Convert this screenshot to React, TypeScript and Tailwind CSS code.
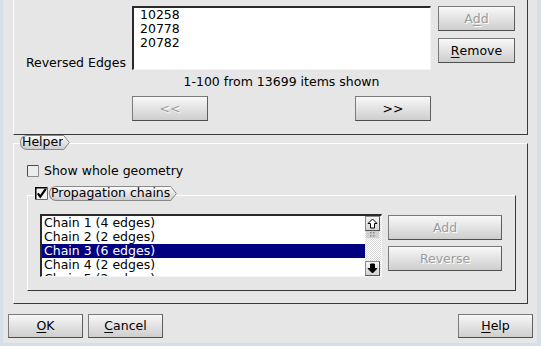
import React from "react";

function Btn({
  children,
  className = "",
  disabled = false,
}: {
  children: React.ReactNode;
  className?: string;
  disabled?: boolean;
}) {
  return (
    <div
      className={`flex items-center justify-center border border-[#7a7a7a] border-b-[#4e4e4e] border-r-[#5e5e5e] bg-gradient-to-b from-[#f8f8f8] to-[#cecece] text-[12.5px] leading-[14px] ${
        disabled ? "text-[#9c9c9c] [text-shadow:1px_1px_0_#ffffff]" : "text-black"
      } ${className}`}
    >
      {children}
    </div>
  );
}

function Tag({ children, id }: { children: React.ReactNode; id: string }) {
  return (
    <span className="inline-flex h-[15px]">
      <span className="flex items-center rounded-l-[7px] border-y border-l border-[#8a8a8a] bg-gradient-to-b from-[#fbfbfb] to-[#cdcdcd] pl-[1px] text-[12.5px] leading-none text-black">
        {children}
      </span>
      <svg width="7" height="15" viewBox="0 0 7 15" className="block">
        <defs>
          <linearGradient id={id} x1="0" y1="0" x2="0" y2="1">
            <stop offset="0" stopColor="#fbfbfb" />
            <stop offset="1" stopColor="#cdcdcd" />
          </linearGradient>
        </defs>
        <path d="M0 0 H1 L7 7.5 L1 15 H0 Z" fill={`url(#${id})`} />
        <path d="M0 0.5 H0.8 L6.3 7.5 L0.8 14.5 H0" fill="none" stroke="#8a8a8a" />
      </svg>
    </span>
  );
}

function U({ children }: { children: React.ReactNode }) {
  return <span className="underline decoration-1 underline-offset-2">{children}</span>;
}

export default function App() {
  const chains = [
    "Chain 1 (4 edges)",
    "Chain 2 (2 edges)",
    "Chain 3 (6 edges)",
    "Chain 4 (2 edges)",
    "Chain 5 (2 edges)",
  ];
  return (
    <div className="h-[346px] w-[541px] overflow-hidden bg-[#d6dee7] font-['DejaVu_Sans',sans-serif] text-[12.5px] leading-[14px] text-black">
      <div className="ml-[3px] flex h-[343px] w-[534px] flex-col bg-[#e6e6e6]">
        {/* Upper frame */}
        <div className="ml-[10px] h-[135px] w-[515px] border-b border-l border-r border-b-[#3a3a3a] border-l-white border-r-[#3a3a3a]">
          <div className="flex pt-[6px]">
            <div className="flex h-[64px] w-[118px] items-end justify-end pr-[6px]">
              <span className="whitespace-nowrap leading-[14px]">Reversed Edges</span>
            </div>
            <div className="h-[64px] w-[299px] border-b border-l-2 border-r border-t-2 border-b-[#f4f4f4] border-l-[#2a2a2a] border-r-[#f4f4f4] border-t-[#2a2a2a] bg-white pl-[6px]">
              <div>10258</div>
              <div>20778</div>
              <div>20782</div>
            </div>
            <div className="ml-[7px] flex w-[77px] flex-col gap-[7px]">
              <Btn disabled className="h-[25px]">
                A<U>d</U>d
              </Btn>
              <Btn className="h-[25px]">
                <U>R</U>emove
              </Btn>
            </div>
          </div>
          <div className="ml-[118px] mt-[5px] w-[299px] whitespace-nowrap text-center">1-100 from 13699 items shown</div>
          <div className="ml-[118px] mt-[7px] flex w-[299px] justify-between">
            <Btn disabled className="h-[25px] w-[76px]">
              &lt;&lt;
            </Btn>
            <Btn className="h-[25px] w-[76px]">&gt;&gt;</Btn>
          </div>
        </div>

        {/* Helper frame */}
        <div className="relative ml-[10px] mt-[8px] h-[161px] w-[515px] border border-b-[#3a3a3a] border-l-white border-r-[#3a3a3a] border-t-white">
          <div className="absolute left-[6px] top-[-9px]">
            <Tag id="tagHelper">Helper</Tag>
          </div>
          <div className="ml-[13px] mt-[20px] flex h-[14px] items-center gap-[5px]">
            <svg width="12" height="12" viewBox="0 0 12 12" className="block">
              <rect x="0" y="0" width="12" height="12" fill="#ececec" />
              <path d="M0.5 11.5 V0.5 H11.5" fill="none" stroke="#4a4a4a" />
              <path d="M11.5 0.5 V11.5 H0.5" fill="none" stroke="#8c8c8c" />
            </svg>
            <span>Show whole geometry</span>
          </div>

          {/* Propagation chains frame */}
          <div className="relative ml-[13px] mt-[17px] h-[96px] w-[489px] border border-b-[#3a3a3a] border-l-white border-r-[#3a3a3a] border-t-white">
            <div className="absolute left-[7px] top-[-10px] flex h-[15px] items-center gap-[1px]">
              <svg width="13" height="13" viewBox="0 0 13 13" className="block">
                <rect x="0" y="0" width="13" height="13" fill="#f2f2f2" />
                <path d="M0.75 12.5 V0.75 H12.5" fill="none" stroke="#000" strokeWidth="1.5" />
                <path d="M12.5 0.75 V12.5 H0.75" fill="none" stroke="#6a6a6a" strokeWidth="1" />
                <path d="M2.8 6.3 L5.3 9.6 L10.8 1.8" fill="none" stroke="#000" strokeWidth="2.2" />
              </svg>
              <Tag id="tagProp">Propagation chains</Tag>
            </div>
            <div className="ml-[12px] mt-[18px] flex items-start">
              <div className="flex h-[63px] w-[342px] border-b border-l-2 border-r border-t-2 border-b-[#f4f4f4] border-l-[#2a2a2a] border-r-[#f4f4f4] border-t-[#2a2a2a] bg-white">
                <div className="h-full flex-1 overflow-hidden">
                  {chains.map((c, i) => (
                    <div
                      key={c}
                      className={`h-[14px] whitespace-nowrap pl-[2px] ${i === 2 ? "bg-[#000080] text-white" : "text-black"}`}
                    >
                      {c}
                    </div>
                  ))}
                </div>
                <div className="flex w-[16px] flex-col bg-[image:repeating-conic-gradient(#d6d6d6_0%_25%,#ffffff_0%_50%)] bg-[length:2px_2px]">
                  <div className="flex h-[15px] w-[15px] items-center justify-center border border-[#8a8a8a] border-b-[#555] border-r-[#555] bg-gradient-to-b from-[#f6f6f6] to-[#d2d2d2]">
                    <svg width="11" height="11" viewBox="0 0 11 11" className="block">
                      <path d="M5.5 1 L10 5.5 H7.5 V10 H3.5 V5.5 H1 Z" fill="#ffffff" stroke="#000" strokeWidth="1" />
                    </svg>
                  </div>
                  <div className="mx-[1px] flex h-[7px] w-[13px] items-center justify-center bg-[#d0d0d0]">
                    <svg width="5" height="5" viewBox="0 0 5 5" className="block">
                      <rect x="0" y="0" width="1.5" height="1.5" fill="#888" />
                      <rect x="3" y="0" width="1.5" height="1.5" fill="#888" />
                      <rect x="0" y="3" width="1.5" height="1.5" fill="#888" />
                      <rect x="3" y="3" width="1.5" height="1.5" fill="#888" />
                    </svg>
                  </div>
                  <div className="flex-1" />
                  <div className="flex h-[15px] w-[15px] items-center justify-center border border-[#8a8a8a] border-b-[#555] border-r-[#555] bg-gradient-to-b from-[#f6f6f6] to-[#d2d2d2]">
                    <svg width="11" height="11" viewBox="0 0 11 11" className="block">
                      <path d="M5.5 10 L10 5.5 H7.5 V1 H3.5 V5.5 H1 Z" fill="#000" stroke="#000" strokeWidth="1" />
                    </svg>
                  </div>
                </div>
              </div>
              <div className="ml-[6px] mt-[1px] flex w-[114px] flex-col gap-[6px]">
                <Btn disabled className="h-[25px]">
                  Add
                </Btn>
                <Btn disabled className="h-[25px]">
                  Reverse
                </Btn>
              </div>
            </div>
          </div>
        </div>

        {/* Bottom buttons */}
        <div className="mt-[10px] flex justify-between pl-[5px] pr-[4px]">
          <div className="flex gap-[5px]">
            <Btn className="h-[24px] w-[75px]">
              <U>O</U>K
            </Btn>
            <Btn className="h-[24px] w-[75px]">
              <U>C</U>ancel
            </Btn>
          </div>
          <Btn className="h-[24px] w-[75px]">
            <U>H</U>elp
          </Btn>
        </div>
      </div>
    </div>
  );
}
